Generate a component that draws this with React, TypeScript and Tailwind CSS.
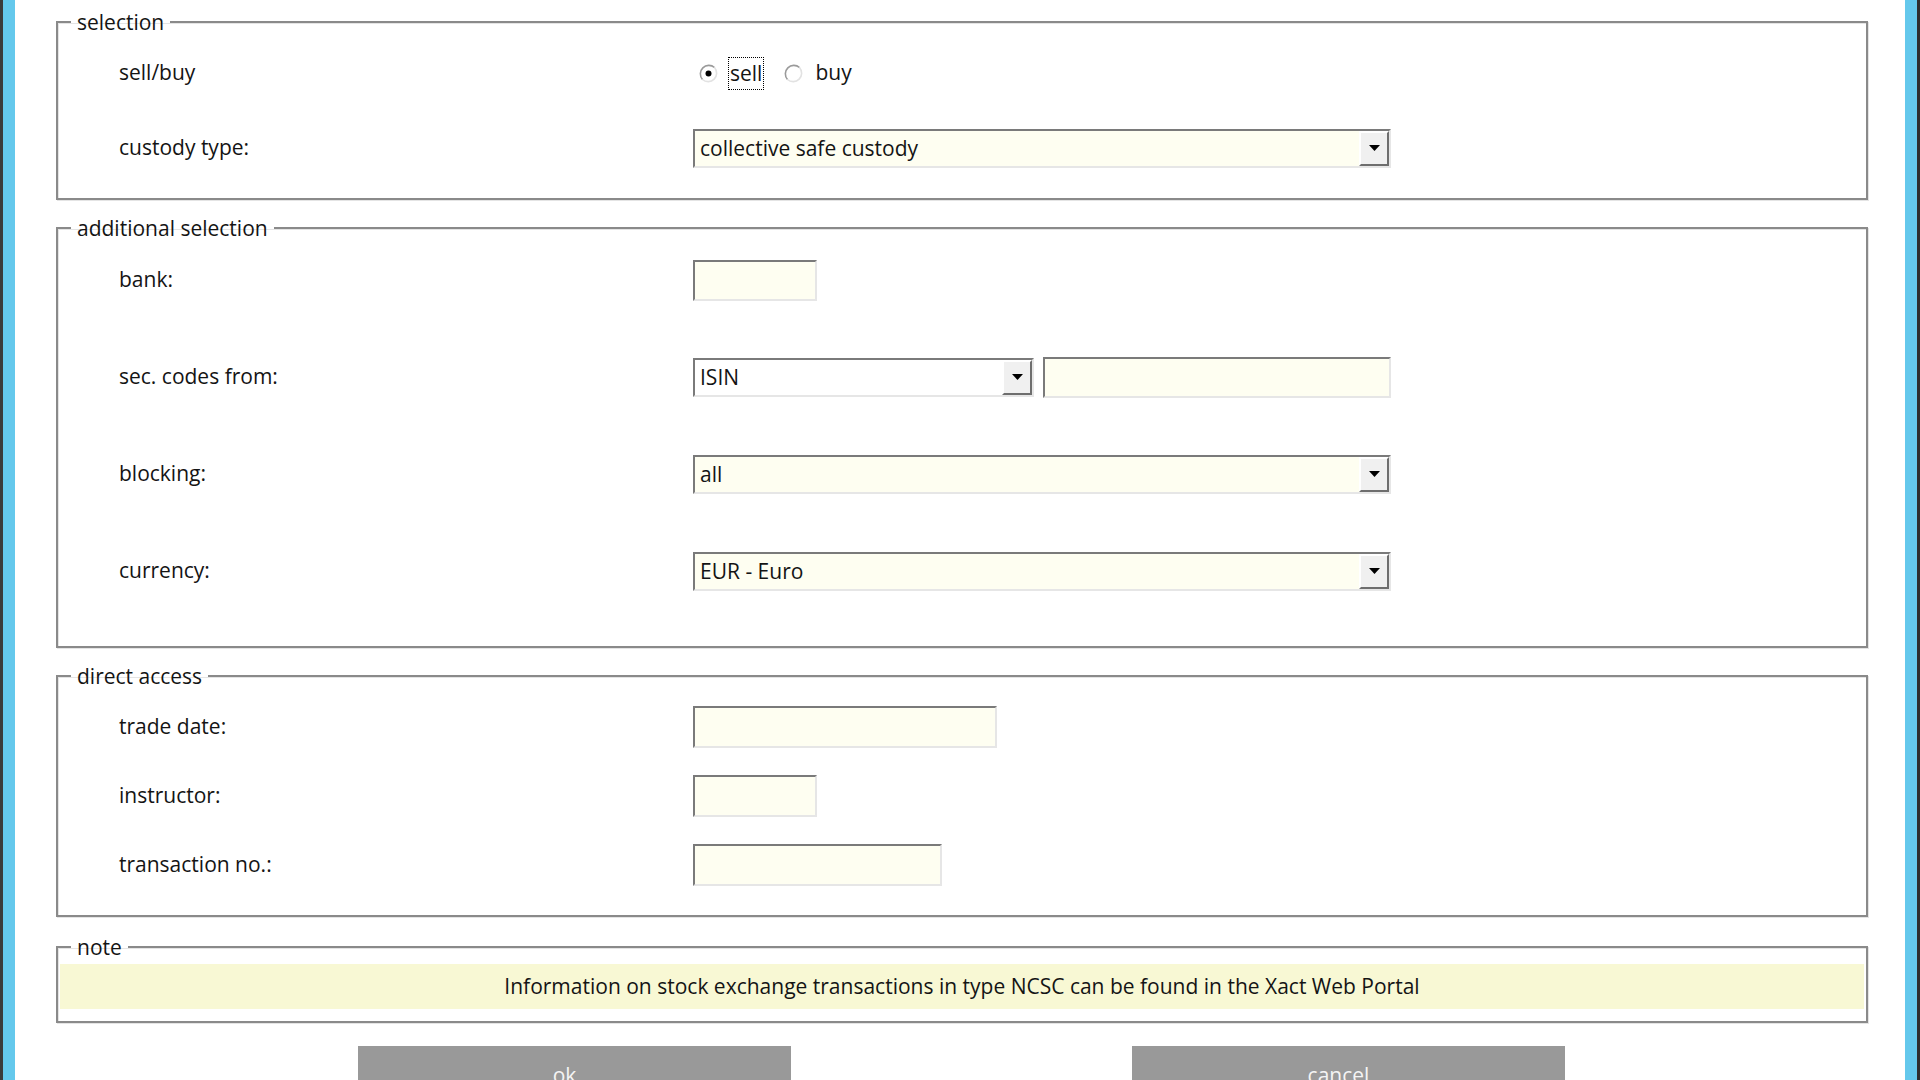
import React from "react";

interface GroupBoxProps {
    title: string;
    className?: string;
    children: React.ReactNode;
}

function GroupBox({ title, className, children }: GroupBoxProps) {
    return (
        <fieldset className={"border-2 border-[#8a8a8a] shadow-[1px_1px_0_#e4e4e4,inset_1px_1px_0_#e4e4e4] " + (className ?? "")}>
            <legend className="ml-[13px] px-[6px] leading-[28px] text-[#141414]">{title}</legend>
            {children}
        </fieldset>
    );
}

function Row({ label, h, children }: { label: string; h: string; children?: React.ReactNode }) {
    return (
        <div className={"flex items-center " + h}>
            <div className="w-[635px] shrink-0 pl-[61px] text-[#141414]">{label}</div>
            <div className="flex items-center">{children}</div>
        </div>
    );
}

function TextBox({ w, h = "h-[41px]" }: { w: string; h?: string }) {
    return (
        <div
            className={
                "border-2 border-t-[#7a7a7a] border-l-[#7a7a7a] border-r-[#e6e6e6] border-b-[#e6e6e6] bg-[#fefef1] " +
                w +
                " " +
                h
            }
        />
    );
}

function ComboBox({ value, w, white }: { value: string; w: string; white?: boolean }) {
    return (
        <div
            className={
                "flex h-[39px] border-2 border-t-[#7a7a7a] border-l-[#7a7a7a] border-r-[#e6e6e6] border-b-[#e6e6e6] " +
                (white ? "bg-white " : "bg-[#fefef1] ") +
                w
            }
        >
            <div className="flex-1 pl-[5px] leading-[35px] text-[#141414]">{value}</div>
            <div className="flex w-[30px] items-center justify-center border-2 border-t-white border-l-white border-r-[#6e6e6e] border-b-[#6e6e6e] bg-[#f0f0f0]">
                <svg width="11" height="6" viewBox="0 0 11 6">
                    <path d="M0 0 H11 L5.5 6 Z" fill="#000" />
                </svg>
            </div>
        </div>
    );
}

function Radio({ checked }: { checked?: boolean }) {
    return (
        <svg width="19" height="19" viewBox="0 0 19 19" className="shrink-0">
            <circle cx="9.5" cy="9.5" r="8.5" fill="#fff" />
            <path d="M3.5 15.5 A8.5 8.5 0 0 1 15.5 3.5" fill="none" stroke="#9a9a9a" strokeWidth="1.6" />
            <path d="M15.5 3.5 A8.5 8.5 0 0 1 3.5 15.5" fill="none" stroke="#e2e2e2" strokeWidth="1.6" />
            {checked && <circle cx="9.5" cy="9.5" r="3" fill="#000" />}
        </svg>
    );
}

export default function App() {
    return (
        <div className="flex h-screen overflow-hidden bg-white font-['Open_Sans','Noto_Sans',sans-serif] text-[21px]">
            <div className="w-[3px] bg-[#3a3a3a]" />
            <div className="w-[12px] bg-[#64c8ec]" />

            <div className="flex flex-1 flex-col pl-[41px] pr-[37px] pt-[8px]">
                <GroupBox title="selection">
                    <div className="flex flex-col gap-[35px] pt-[17px] pb-[30px]">
                        <Row label="sell/buy" h="h-[40px]">
                            <div className="ml-[6px] flex items-center text-[#141414]">
                                <Radio checked />
                                <span className="ml-[10px] border border-dotted border-black px-[1px] leading-[31px]">sell</span>
                                <span className="ml-[20px]">
                                    <Radio />
                                </span>
                                <span className="ml-[12px]">buy</span>
                            </div>
                        </Row>
                        <Row label="custody type:" h="h-[40px]">
                            <ComboBox value="collective safe custody" w="w-[698px]" />
                        </Row>
                    </div>
                </GroupBox>

                <GroupBox title="additional selection" className="mt-[14px]">
                    <div className="flex flex-col gap-[57px] pt-[18px] pb-[55px]">
                        <Row label="bank:" h="h-[40px]">
                            <TextBox w="w-[124px]" />
                        </Row>
                        <Row label="sec. codes from:" h="h-[40px]">
                            <ComboBox value="ISIN" w="w-[341px]" white />
                            <div className="ml-[9px]">
                                <TextBox w="w-[348px]" />
                            </div>
                        </Row>
                        <Row label="blocking:" h="h-[40px]">
                            <ComboBox value="all" w="w-[698px]" />
                        </Row>
                        <Row label="currency:" h="h-[40px]">
                            <ComboBox value="EUR - Euro" w="w-[698px]" />
                        </Row>
                    </div>
                </GroupBox>

                <GroupBox title="direct access" className="mt-[14px]">
                    <div className="flex flex-col gap-[27px] pt-[16px] pb-[29px]">
                        <Row label="trade date:" h="h-[42px]">
                            <TextBox w="w-[304px]" h="h-[42px]" />
                        </Row>
                        <Row label="instructor:" h="h-[42px]">
                            <TextBox w="w-[124px]" h="h-[42px]" />
                        </Row>
                        <Row label="transaction no.:" h="h-[42px]">
                            <TextBox w="w-[249px]" h="h-[42px]" />
                        </Row>
                    </div>
                </GroupBox>

                <GroupBox title="note" className="mt-[16px]">
                    <div className="px-[2px] pt-[3px] pb-[12px]">
                        <div className="flex h-[45px] items-center justify-center bg-[#f8f8d4] text-[#141414]">
                            Information on stock exchange transactions in type NCSC can be found in the Xact Web Portal
                        </div>
                    </div>
                </GroupBox>

                <div className="mt-[23px] flex gap-[341px] pl-[302px]">
                    <button className="flex h-[60px] w-[433px] items-center justify-center bg-[#999999] pr-[20px] text-[#f4f4f4]">
                        ok
                    </button>
                    <button className="flex h-[60px] w-[433px] items-center justify-center bg-[#999999] pr-[20px] text-[#f4f4f4]">
                        cancel
                    </button>
                </div>
            </div>

            <div className="w-[12px] bg-[#64c8ec]" />
            <div className="w-[3px] bg-[#2e2e2e]" />
        </div>
    );
}
